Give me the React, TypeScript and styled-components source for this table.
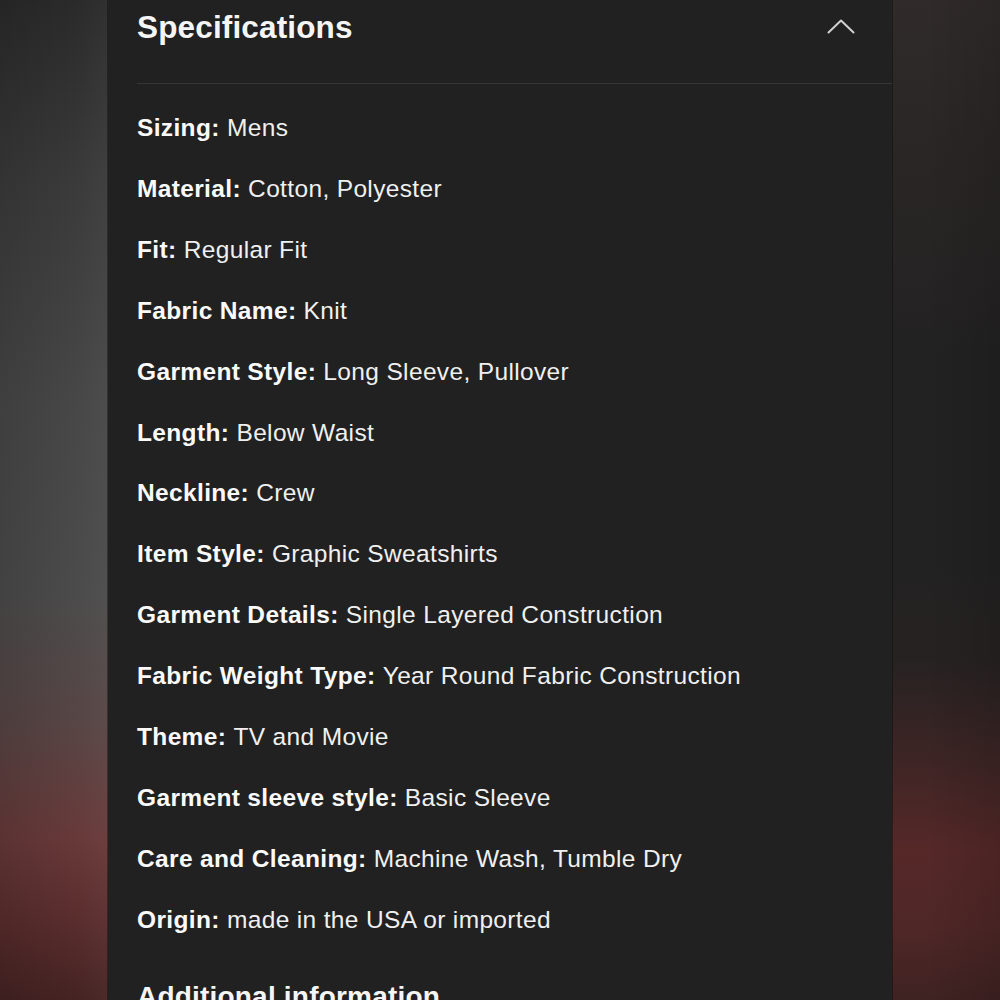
import React from "react";
import styled, { createGlobalStyle } from "styled-components";

const Global = createGlobalStyle`
  html, body {
    margin: 0;
    padding: 0;
    height: 1000px;
    overflow: hidden;
    background: #222;
  }
  * { box-sizing: border-box; }
`;

const Page = styled.div`
  display: flex;
  width: 1000px;
  height: 1000px;
  overflow: hidden;
  font-family: "Liberation Sans", Arial, Helvetica, sans-serif;
`;

const Side = styled.div<{ $side: "left" | "right" }>`
  flex: 0 0 108px;
  height: 100%;
  background: ${(p) =>
    p.$side === "left"
      ? `linear-gradient(to right, rgba(0,0,0,0.12), rgba(0,0,0,0) 70%, rgba(255,255,255,0.03)),
         linear-gradient(to bottom, #2a2a2a 0%, #3a3a3a 18%, #474747 40%, #4c4b4b 60%, #574545 72%, #683939 84%, #5a2d2d 92%, #452323 100%)`
      : `linear-gradient(to left, rgba(0,0,0,0.12), rgba(0,0,0,0) 70%),
         linear-gradient(to bottom, #302b2a 0%, #2a2626 15%, #232222 35%, #222 55%, #272222 66%, #3e2525 76%, #562828 85%, #4f2727 93%, #3f2222 100%)`};
  box-shadow: ${(p) =>
    p.$side === "left" ? "inset -1px 0 0 rgba(0,0,0,0.35)" : "inset 1px 0 0 rgba(0,0,0,0.35)"};
`;

const Panel = styled.section`
  flex: 0 0 784px;
  height: 100%;
  background: #212121;
  padding-left: 29px;
  overflow: hidden;
`;

const Header = styled.div`
  display: flex;
  justify-content: space-between;
  align-items: flex-start;
  height: 84px;
  padding-top: 7px;
  padding-right: 37px;
  border-bottom: 1px solid #363636;
`;

const Title = styled.h2`
  margin: 0;
  font-size: 31.5px;
  line-height: 40px;
  font-weight: 700;
  letter-spacing: 0.15px;
  color: #f5f5f5;
`;

const Chevron = styled.svg`
  margin-top: 12px;
  display: block;
`;

const List = styled.dl`
  margin: 0;
  padding-top: 14px;
`;

const Row = styled.div`
  font-size: 24.5px;
  line-height: 60.9px;
  letter-spacing: 0.35px;
  color: #f0f0f0;
  white-space: nowrap;
`;

const Label = styled.dt`
  display: inline;
  font-weight: 700;
  color: #fafafa;
`;

const Value = styled.dd`
  display: inline;
  margin: 0;
  font-weight: 400;
`;

const SubTitle = styled.h3`
  margin: 26px 0 0;
  font-size: 28px;
  line-height: 40px;
  font-weight: 700;
  letter-spacing: 0.2px;
  color: #f5f5f5;
`;

const specs: [string, string][] = [
  ["Sizing", "Mens"],
  ["Material", "Cotton, Polyester"],
  ["Fit", "Regular Fit"],
  ["Fabric Name", "Knit"],
  ["Garment Style", "Long Sleeve, Pullover"],
  ["Length", "Below Waist"],
  ["Neckline", "Crew"],
  ["Item Style", "Graphic Sweatshirts"],
  ["Garment Details", "Single Layered Construction"],
  ["Fabric Weight Type", "Year Round Fabric Construction"],
  ["Theme", "TV and Movie"],
  ["Garment sleeve style", "Basic Sleeve"],
  ["Care and Cleaning", "Machine Wash, Tumble Dry"],
  ["Origin", "made in the USA or imported"],
];

export default function App() {
  return (
    <>
      <Global />
      <Page>
        <Side $side="left" />
        <Panel>
          <Header>
            <Title>Specifications</Title>
            <Chevron width="28" height="15" viewBox="0 0 28 15" fill="none">
              <polyline
                points="1.5,13.5 14,1.5 26.5,13.5"
                stroke="#d0d0d0"
                strokeWidth="2"
                strokeLinecap="round"
                strokeLinejoin="round"
              />
            </Chevron>
          </Header>
          <List>
            {specs.map(([k, v]) => (
              <Row key={k}>
                <Label>{k}:</Label> <Value>{v}</Value>
              </Row>
            ))}
          </List>
          <SubTitle>Additional information</SubTitle>
        </Panel>
        <Side $side="right" />
      </Page>
    </>
  );
}
